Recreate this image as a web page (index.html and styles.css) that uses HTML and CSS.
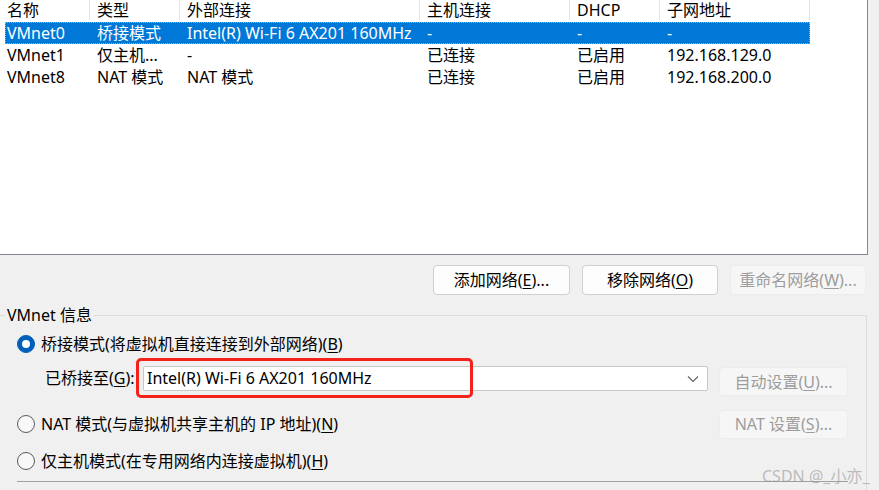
FILE: index.html
```html
<!DOCTYPE html>
<html lang="zh-CN">
<head>
<meta charset="utf-8">
<title>虚拟网络编辑器</title>
<link rel="stylesheet" href="styles.css">
</head>
<body>
<div class="list">
  <div class="hdr">
    <div class="hc c1">名称</div>
    <div class="hc c2">类型</div>
    <div class="hc c3">外部连接</div>
    <div class="hc c4">主机连接</div>
    <div class="hc c5">DHCP</div>
    <div class="hc c6">子网地址</div>
  </div>
  <div class="row sel">
    <div class="cell c1">VMnet0</div>
    <div class="cell c2">桥接模式</div>
    <div class="cell c3">Intel(R) Wi-Fi 6 AX201 160MHz</div>
    <div class="cell c4">-</div>
    <div class="cell c5">-</div>
    <div class="cell c6">-</div>
  </div>
  <div class="row">
    <div class="cell c1">VMnet1</div>
    <div class="cell c2">仅主机...</div>
    <div class="cell c3">-</div>
    <div class="cell c4">已连接</div>
    <div class="cell c5">已启用</div>
    <div class="cell c6">192.168.129.0</div>
  </div>
  <div class="row">
    <div class="cell c1">VMnet8</div>
    <div class="cell c2">NAT 模式</div>
    <div class="cell c3">NAT 模式</div>
    <div class="cell c4">已连接</div>
    <div class="cell c5">已启用</div>
    <div class="cell c6">192.168.200.0</div>
  </div>
</div>

<div class="actions">
  <button class="btn">添加网络(<u>E</u>)...</button>
  <button class="btn">移除网络(<u>O</u>)</button>
  <button class="btn dis">重命名网络(<u>W</u>)...</button>
</div>

<fieldset class="group">
  <legend class="legend">VMnet 信息</legend>
  <div class="r1">
    <span class="radio on"></span>
    <span class="rlabel">桥接模式(将虚拟机直接连接到外部网络)(<u>B</u>)</span>
  </div>
  <div class="r2">
    <span class="blabel">已桥接至(<u>G</u>):</span>
    <div class="combo">
      <span class="ctext">Intel(R) Wi-Fi 6 AX201 160MHz</span>
      <svg class="chev" width="12" height="8" viewBox="0 0 12 8"><path d="M1 1.5 L6 6.5 L11 1.5" fill="none" stroke="#606060" stroke-width="1.1"/></svg>
      <span class="mark"></span>
    </div>
    <button class="btn dis side">自动设置(<u>U</u>)...</button>
  </div>
  <div class="r3">
    <span class="radio"></span>
    <span class="rlabel grow">NAT 模式(与虚拟机共享主机的 IP 地址)(<u>N</u>)</span>
    <button class="btn dis side">NAT 设置(<u>S</u>)...</button>
  </div>
  <div class="r4">
    <span class="radio"></span>
    <span class="rlabel">仅主机模式(在专用网络内连接虚拟机)(<u>H</u>)</span>
  </div>
  <div class="sep"></div>
</fieldset>

<div class="wm">CSDN @_小亦_</div>
</body>
</html>
```
FILE: styles.css
```css
* { box-sizing: border-box; }
html, body { margin: 0; padding: 0; }
body {
  width: 879px;
  height: 490px;
  overflow: hidden;
  background: #f0f0f0;
  font-family: "Noto Sans", "Noto Sans CJK SC", sans-serif;
  font-size: 16px;
  color: #000;
  position: relative;
}
u { text-decoration: underline; text-underline-offset: 2px; }

.list {
  width: 868px;
  height: 255px;
  background: #fff;
  border-right: 1px solid #828790;
  border-bottom: 1px solid #828790;
}
.hdr {
  display: flex;
  height: 20px;
  margin-bottom: 2px;
}
.hc {
  line-height: 20px;
  padding-left: 7px;
  border-right: 1px solid #e5e5e5;
  white-space: nowrap;
}
.hdr .c1 { width: 90px; }
.c2 { width: 90px; }
.c3 { width: 240px; }
.c4 { width: 150px; }
.c5 { width: 90px; }
.c6 { width: 150px; }

.row {
  display: flex;
  margin-left: 5px;
  width: 805px;
  height: 22px;
  line-height: 22px;
}
.row .c1 { width: 85px; padding-left: 2px; }
.cell { padding-left: 7px; white-space: nowrap; overflow: hidden; }
.row.sel {
  background: #0078d7;
  color: #fff;
  outline: 1px dotted #f7a030;
  outline-offset: -1px;
}

.actions {
  display: flex;
  justify-content: flex-end;
  gap: 12px;
  padding-right: 13px;
  margin-top: 10px;
}
.btn {
  font: inherit;
  font-size: 16px;
  color: #000;
  background: #fdfdfd;
  border: 1px solid #d0d0d0;
  border-radius: 4px;
  height: 30px;
  width: 136px;
  padding: 0;
  line-height: 26px;
  white-space: nowrap;
}
.actions .btn:first-child { width: 137px; }
.btn.dis {
  color: #9d9d9d;
  background: #f6f6f6;
  border-color: #ececec;
}

.group {
  margin: 10px 12px 0 0;
  padding: 0 18px 0 17px;
  border: 1px solid #dcdcdc;
  border-left: none;
  border-bottom: none;
  min-width: 0;
}
.legend {
  margin-left: -12px;
  padding: 0 2px;
  line-height: 20px;
}
.r1, .r3, .r4 {
  display: flex;
  align-items: center;
}
.r1 { height: 22px; margin-top: 8px; }
.r2 {
  display: flex;
  align-items: flex-start;
  height: 30px;
  margin-top: 11px;
  padding-left: 28px;
}
.r3 { height: 30px; margin-top: 13px; }
.r4 { height: 22px; margin-top: 11px; }
.sep {
  margin-top: 9px;
  border-top: 1px solid #a0a0a0;
  height: 10px;
}

.radio {
  width: 18px;
  height: 18px;
  border-radius: 50%;
  border: 1px solid #5a5a5a;
  background: #f8f8f8;
  flex: none;
  display: flex;
  align-items: center;
  justify-content: center;
}
.radio.on {
  background: #005fb8;
  border-color: #005fb8;
}
.radio.on::after {
  content: "";
  width: 8px;
  height: 8px;
  border-radius: 50%;
  background: #fff;
}
.rlabel { margin-left: 6px; line-height: 22px; white-space: nowrap; }
.grow { flex: 1; }

.blabel {
  width: 98px;
  line-height: 25px;
  white-space: nowrap;
}
.combo {
  position: relative;
  flex: 1;
  height: 25px;
  margin-right: 11px;
  background: #fff;
  border: 1px solid #c8c8c8;
  border-radius: 2px;
  display: flex;
  align-items: center;
  padding-left: 3px;
  padding-right: 8px;
}
.ctext { flex: 1; line-height: 23px; white-space: nowrap; }
.chev { flex: none; }
.mark {
  position: absolute;
  left: -8px;
  top: -9px;
  width: 337px;
  height: 40px;
  border: 3px solid #f5221b;
  border-radius: 5px;
}
.side { width: 129px; height: 29px; }
.r2 .side { margin-top: 1px; }

.wm {
  position: absolute;
  left: 762px;
  top: 463px;
  font-size: 16px;
  color: rgba(140, 140, 140, 0.55);
  white-space: nowrap;
}
```
